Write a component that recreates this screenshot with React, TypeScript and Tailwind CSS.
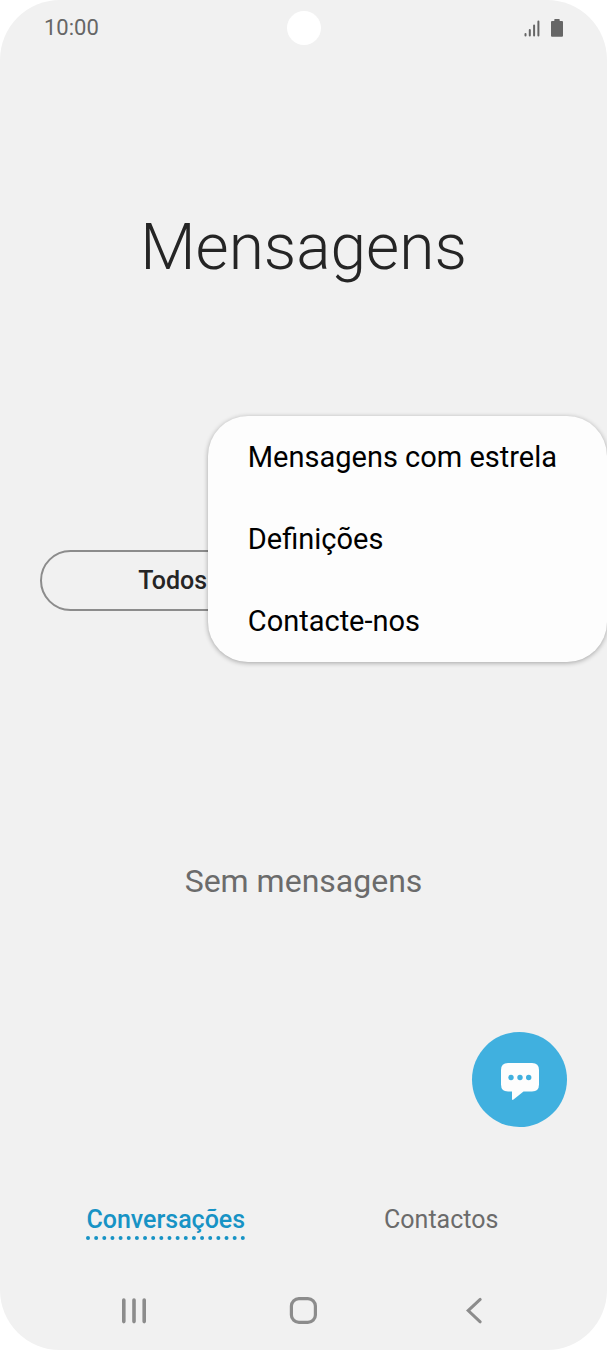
import { useState } from 'react';
import { clsx } from 'clsx';

const MENU_ITEMS = ['Mensagens com estrela', 'Definições', 'Contacte-nos'];

const TABS = ['Conversações', 'Contactos'];

function StatusBar() {
  return (
    <div className="grid grid-cols-3 items-center h-14 px-11 text-[#666666]">
      <time className="text-[22px] leading-7">10:00</time>
      <span className="w-[34px] h-[34px] rounded-full bg-white justify-self-center" />
      <div className="flex items-end justify-end gap-[11px]">
        <svg width="16" height="18" viewBox="0 0 16 18" fill="none" stroke="currentColor" strokeWidth="2" strokeLinecap="round" aria-hidden="true">
          <path d="M1.5 14v1.5M5.8 10v5.5M10.1 5.5v10M14.4 1.5v14" />
        </svg>
        <svg width="12" height="19" viewBox="0 0 12 19" fill="currentColor" aria-hidden="true">
          <path d="M3.3 0.6Q3.3 0 4 0H8Q8.7 0 8.7 0.6V2H11Q12 2 12 3V16.8Q12 17.8 11 17.8H1Q0 17.8 0 16.8V3Q0 2 1 2H3.3Z" />
        </svg>
      </div>
    </div>
  );
}

function OverflowMenu() {
  return (
    <ul className="absolute top-0 right-0 overflow-hidden rounded-[40px] bg-[#fdfdfd] shadow-[0_1px_5px_rgba(0,0,0,0.32)]">
      {MENU_ITEMS.map((item) => (
        <li key={item}>
          <button type="button" className="flex items-center w-full h-[82px] pl-10 pr-[50px] text-[29px] leading-9 text-black text-left whitespace-nowrap">
            {item}
          </button>
        </li>
      ))}
    </ul>
  );
}

function NavBar() {
  return (
    <nav className="grid grid-cols-3 h-20 px-12 text-[#8c8c8c]">
      <button type="button" className="flex items-center justify-center" aria-label="Recentes">
        <svg width="28" height="28" viewBox="0 0 28 28" fill="none" stroke="currentColor" strokeWidth="3.6" strokeLinecap="round">
          <path d="M4.8 4v21.6M15 4v21.6M25.2 4v21.6" />
        </svg>
      </button>
      <button type="button" className="flex items-center justify-center" aria-label="Início">
        <svg width="28" height="28" viewBox="0 0 28 28" fill="none" stroke="currentColor" strokeWidth="3.2">
          <rect x="2.4" y="2.6" width="24" height="23.8" rx="7.5" />
        </svg>
      </button>
      <button type="button" className="flex items-center justify-center" aria-label="Voltar">
        <svg width="28" height="28" viewBox="0 0 28 28" fill="none" stroke="currentColor" strokeWidth="3" strokeLinecap="round">
          <path d="M20.2 3.4L8.2 14.6L20.2 25.8" />
        </svg>
      </button>
    </nav>
  );
}

export default function App() {
  const [tab, setTab] = useState(TABS[0]);

  return (
    <div className="bg-white">
      <div className="flex flex-col min-h-screen rounded-[60px] bg-[#f1f1f1] font-['Roboto',sans-serif]">
        <StatusBar />

        <header className="pt-[156px] pb-[132px]">
          <h1 className="text-center text-[64px] leading-[72px] font-light text-[#252525]">Mensagens</h1>
        </header>

        <section className="relative pt-[134px] px-10">
          <div className="flex h-[61px] rounded-full border-2 border-[#8c8c8c]">
            <button type="button" className="w-1/2 text-[25px] leading-8 font-medium text-[#252525]">
              Todos
            </button>
          </div>
          <OverflowMenu />
        </section>

        <main className="relative flex flex-1 items-center justify-center">
          <p className="text-[32px] leading-10 text-[#6b6b6b]">Sem mensagens</p>
          <button
            type="button"
            className="absolute right-10 bottom-6 flex items-center justify-center w-[95px] h-[95px] rounded-full bg-[#40b0df]"
            aria-label="Nova mensagem"
          >
            <svg width="38" height="42" viewBox="0 -4 38 42" aria-hidden="true">
              <path
                fill="#fdfdfd"
                d="M7 0H31Q38 0 38 7V21.5Q38 28.5 31 28.5H22.5L12.5 36.6Q11 37.6 11 36V28.5H7Q0 28.5 0 21.5V7Q0 0 7 0Z"
              />
              <g fill="#40b0df">
                <circle cx="10" cy="14.5" r="2.7" />
                <circle cx="19" cy="14.5" r="2.7" />
                <circle cx="27.7" cy="14.5" r="2.7" />
              </g>
            </svg>
          </button>
        </main>

        <div role="tablist" className="grid grid-cols-2 px-7 pt-[52px] pb-[30px]">
          {TABS.map((name) => (
            <button
              key={name}
              type="button"
              role="tab"
              aria-selected={tab === name}
              onClick={() => setTab(name)}
              className={clsx(
                'justify-self-center border-b-4 border-dotted text-[25px] leading-[33px]',
                tab === name ? 'border-[#1793c5] font-medium text-[#1793c5]' : 'border-transparent text-[#6b6b6b]'
              )}
            >
              {name}
            </button>
          ))}
        </div>

        <NavBar />
      </div>
    </div>
  );
}
